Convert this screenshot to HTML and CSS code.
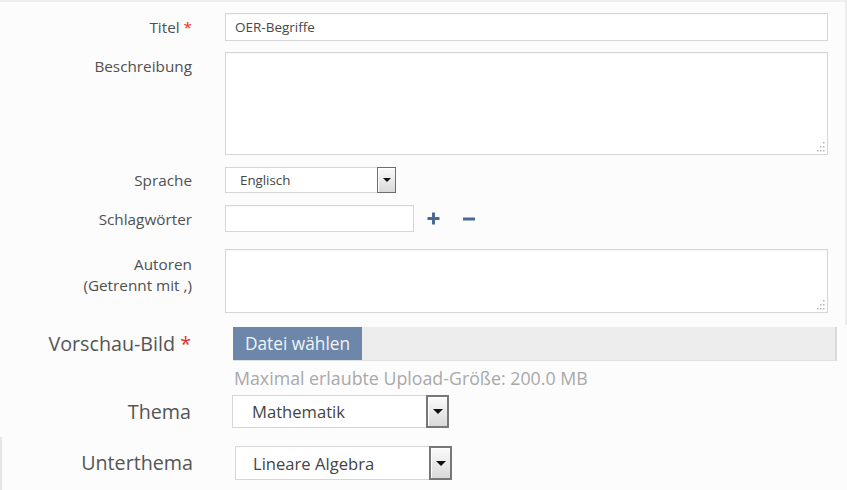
FILE: index.html
```html
<!DOCTYPE html>
<html lang="de">
<head>
<meta charset="utf-8">
<title>OER Formular</title>
<link rel="stylesheet" href="styles.css">
</head>
<body>
<div class="page">
  <section class="top">
    <div class="row row-title">
      <label class="lbl">Titel <span class="req">*</span></label>
      <div class="field"><input class="inp inp-wide" type="text" value="OER-Begriffe"></div>
    </div>
    <div class="row row-desc">
      <label class="lbl lbl-top">Beschreibung</label>
      <div class="field">
        <div class="ta-wrap ta-desc">
          <textarea class="ta"></textarea>
          <svg class="grip" width="10" height="10" viewBox="0 0 10 10"><g fill="#b4b4b4"><rect x="8" y="0" width="1.5" height="1.5"/><rect x="5" y="4" width="1.5" height="1.5"/><rect x="8" y="4" width="1.5" height="1.5"/><rect x="2" y="8" width="1.5" height="1.5"/><rect x="5" y="8" width="1.5" height="1.5"/><rect x="8" y="8" width="1.5" height="1.5"/></g></svg>
        </div>
      </div>
    </div>
    <div class="row row-lang">
      <label class="lbl">Sprache</label>
      <div class="field">
        <div class="sel sel-sm"><span class="sel-val">Englisch</span><span class="sel-btn"><span class="tri"></span></span></div>
      </div>
    </div>
    <div class="row row-tags">
      <label class="lbl">Schlagwörter</label>
      <div class="field tags">
        <input class="inp inp-tag" type="text">
        <svg class="ico-plus" width="13" height="13" viewBox="0 0 13 13"><path d="M6.5 0.5v12M0.5 6.5h12" stroke="#4b6a93" stroke-width="3"/></svg>
        <svg class="ico-minus" width="12" height="4" viewBox="0 0 12 4"><path d="M0 2h12" stroke="#4b6a93" stroke-width="3"/></svg>
      </div>
    </div>
    <div class="row row-authors">
      <label class="lbl lbl-top lbl-authors">Autoren<br>(Getrennt mit ,)</label>
      <div class="field">
        <div class="ta-wrap ta-authors">
          <textarea class="ta"></textarea>
          <svg class="grip" width="10" height="10" viewBox="0 0 10 10"><g fill="#b4b4b4"><rect x="8" y="0" width="1.5" height="1.5"/><rect x="5" y="4" width="1.5" height="1.5"/><rect x="8" y="4" width="1.5" height="1.5"/><rect x="2" y="8" width="1.5" height="1.5"/><rect x="5" y="8" width="1.5" height="1.5"/><rect x="8" y="8" width="1.5" height="1.5"/></g></svg>
        </div>
      </div>
    </div>
  </section>

  <section class="bottom">
    <div class="brow row-file">
      <label class="blbl">Vorschau-Bild <span class="req">*</span></label>
      <div class="filebar"><span class="filebtn">Datei wählen</span></div>
    </div>
    <div class="hint">Maximal erlaubte Upload-Größe: 200.0 MB</div>
    <div class="brow row-topic">
      <label class="blbl">Thema</label>
      <div class="sel sel-lg"><span class="sel-val">Mathematik</span><span class="sel-btn"><span class="tri"></span></span></div>
    </div>
    <div class="brow row-sub">
      <label class="blbl">Unterthema</label>
      <div class="sel sel-lg sel-sub"><span class="sel-val">Lineare Algebra</span><span class="sel-btn"><span class="tri"></span></span></div>
    </div>
  </section>
</div>
</body>
</html>
```

FILE: styles.css
```css
html, body {
  margin: 0;
  padding: 0;
  background: #fcfcfc;
}
body {
  font-family: "Open Sans", "DejaVu Sans", sans-serif;
  color: #555;
  width: 847px;
  height: 490px;
  overflow: hidden;
}
.page {
  display: flex;
  flex-direction: column;
}

/* ---------- top section ---------- */
.top {
  width: 845px;
  border-top: 2px solid #efefef;
  border-right: 2px solid #ececec;
  padding: 11px 0 12px;
  display: flex;
  flex-direction: column;
}
.row {
  display: grid;
  grid-template-columns: 192px 603px;
  column-gap: 33px;
  align-items: center;
}
.row-title { margin-bottom: 11px; }
.row-desc { margin-bottom: 12px; align-items: start; }
.row-lang { margin-bottom: 12px; }
.row-tags { margin-bottom: 17px; }
.row-authors { align-items: start; }

.lbl {
  font-size: 15.3px;
  line-height: 20px;
  text-align: right;
  color: #505050;
}
.lbl-top { padding-top: 4px; }
.lbl-authors { padding-top: 5px; line-height: 21px; }
.req { color: #e8322f; }

.inp {
  box-sizing: border-box;
  border: 1px solid #d6d6d6;
  background: #fff;
  font-family: "Open Sans", sans-serif;
  font-size: 13.5px;
  color: #484848;
  padding: 0 9px;
  outline: none;
  box-shadow: inset 0 1px 1px rgba(0,0,0,0.03);
}
.inp-wide { width: 603px; height: 28px; }
.inp-tag { width: 189px; height: 27px; }

.tags {
  display: flex;
  align-items: center;
}
.ico-plus { margin-left: 13px; }
.ico-minus { margin-left: 23px; margin-top: 1px; }

.ta-wrap {
  position: relative;
  width: 603px;
}
.ta {
  display: block;
  box-sizing: border-box;
  width: 100%;
  height: 100%;
  border: 1px solid #d6d6d6;
  background: #fff;
  resize: none;
  outline: none;
  margin: 0;
  box-shadow: inset 0 1px 1px rgba(0,0,0,0.03);
}
.ta-desc { height: 103px; }
.ta-authors { height: 64px; }
.grip {
  position: absolute;
  right: 3px;
  bottom: 3px;
}

/* select */
.sel {
  box-sizing: border-box;
  display: flex;
  border: 1px solid #d6d6d6;
  background: #fff;
  color: #444;
}
.sel-val {
  flex: 1;
  align-self: center;
  white-space: nowrap;
}
.sel-btn {
  box-sizing: border-box;
  margin: -1px -1px -1px 0;
  border: 1px solid #6e6e6e;
  background: linear-gradient(#fbfbfb, #d9d9d9);
  box-shadow: inset 1px 1px 0 #fff;
  display: flex;
  align-items: center;
  justify-content: center;
}
.tri {
  width: 0;
  height: 0;
  border-left: 4px solid transparent;
  border-right: 4px solid transparent;
  border-top: 4px solid #111;
}
.sel-sm {
  width: 171px;
  height: 26px;
  font-size: 13.3px;
}
.sel-sm .sel-val { padding-left: 14px; }
.sel-sm .sel-btn { width: 19px; }

/* ---------- bottom section ---------- */
.bottom {
  padding-top: 2px;
  display: flex;
  flex-direction: column;
}
.brow {
  display: grid;
  grid-template-columns: 191px auto;
  column-gap: 42px;
  align-items: center;
  justify-content: start;
}
.blbl {
  font-size: 19.7px;
  line-height: 26px;
  text-align: right;
  color: #555;
}
.filebar {
  box-sizing: border-box;
  width: 604px;
  height: 34px;
  display: flex;
  background: #ededed;
  border-right: 2px solid #d9d9d9;
  border-bottom: 1px solid #e0e0e0;
}
.filebtn {
  width: 129px;
  background: #6c87a9;
  color: #f2f5f9;
  font-size: 17.3px;
  line-height: 34px;
  text-align: center;
}
.hint {
  margin-left: 234px;
  height: 34px;
  line-height: 34px;
  font-size: 17.8px;
  color: #a9a9a9;
}
.row-topic { margin-bottom: 9px; }
.row-sub {
  border-left: 2px solid #e6e6e6;
  padding: 9px 0 10px;
}
.sel-lg {
  width: 217px;
  height: 33px;
  font-size: 16.6px;
}
.sel-lg .sel-val { padding-left: 19px; }
.sel-lg .sel-btn { width: 23px; border-width: 2px; border-color: #777; }
.sel-lg .tri {
  border-left-width: 5px;
  border-right-width: 5px;
  border-top-width: 5px;
}
.row-topic .sel-lg { margin-left: -1px; }
.sel-sub { height: 34px; }
.sel-sub .sel-val { padding-left: 17px; }
```
